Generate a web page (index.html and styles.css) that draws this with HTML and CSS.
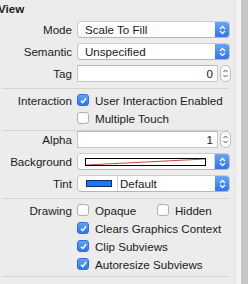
FILE: index.html
```html
<!DOCTYPE html>
<html>
<head>
<meta charset="utf-8">
<link rel="stylesheet" href="styles.css">
</head>
<body>
<div class="page">
  <div class="panel">
    <div class="title">View</div>
    <div class="section fields">
      <div class="row">
        <span class="label">Mode</span>
        <div class="popup"><span class="ptext">Scale To Fill</span><span class="arrows"><svg width="7" height="10" viewBox="0 0 7 10"><path d="M1 4 L3.5 1.5 L6 4 M1 6 L3.5 8.5 L6 6" fill="none" stroke="#fff" stroke-width="1.3"/></svg></span></div>
      </div>
      <div class="row">
        <span class="label">Semantic</span>
        <div class="popup"><span class="ptext">Unspecified</span><span class="arrows"><svg width="7" height="10" viewBox="0 0 7 10"><path d="M1 4 L3.5 1.5 L6 4 M1 6 L3.5 8.5 L6 6" fill="none" stroke="#fff" stroke-width="1.3"/></svg></span></div>
      </div>
      <div class="row">
        <span class="label">Tag</span>
        <div class="numfield"><div class="field">0</div><div class="stepper"><svg width="7" height="13" viewBox="0 0 7 13"><path d="M1.5 5 L3.5 3 L5.5 5 M1.5 8 L3.5 10 L5.5 8" fill="none" stroke="#555" stroke-width="1"/></svg></div></div>
      </div>
    </div>
    <div class="sep"></div>
    <div class="section checks">
      <div class="crow">
        <span class="label">Interaction</span>
        <span class="cb on"><svg width="9" height="9" viewBox="0 0 9 9"><path d="M2 4.7 L3.8 6.6 L7 2.2" fill="none" stroke="#fff" stroke-width="1.5"/></svg></span>
        <span class="ctext">User Interaction Enabled</span>
      </div>
      <div class="crow">
        <span class="label"></span>
        <span class="cb"></span>
        <span class="ctext">Multiple Touch</span>
      </div>
    </div>
    <div class="sep"></div>
    <div class="section fields">
      <div class="row">
        <span class="label">Alpha</span>
        <div class="numfield"><div class="field">1</div><div class="stepper"><svg width="7" height="13" viewBox="0 0 7 13"><path d="M1.5 5 L3.5 3 L5.5 5 M1.5 8 L3.5 10 L5.5 8" fill="none" stroke="#555" stroke-width="1"/></svg></div></div>
      </div>
      <div class="row">
        <span class="label">Background</span>
        <div class="popup"><span class="well"><svg class="slash" width="121" height="8" viewBox="0 0 121 8" preserveAspectRatio="none"><line x1="0" y1="8" x2="121" y2="0" stroke="#c8261e" stroke-width="1"/></svg></span><span class="arrows"><svg width="7" height="10" viewBox="0 0 7 10"><path d="M1 4 L3.5 1.5 L6 4 M1 6 L3.5 8.5 L6 6" fill="none" stroke="#fff" stroke-width="1.3"/></svg></span></div>
      </div>
      <div class="row">
        <span class="label">Tint</span>
        <div class="popup"><span class="swatch-cell"><span class="swatch"></span></span><span class="ptext tint">Default</span><span class="arrows"><svg width="7" height="10" viewBox="0 0 7 10"><path d="M1 4 L3.5 1.5 L6 4 M1 6 L3.5 8.5 L6 6" fill="none" stroke="#fff" stroke-width="1.3"/></svg></span></div>
      </div>
    </div>
    <div class="sep"></div>
    <div class="section checks">
      <div class="crow">
        <span class="label">Drawing</span>
        <span class="cb"></span>
        <span class="ctext fixed">Opaque</span>
        <span class="cb"></span>
        <span class="ctext">Hidden</span>
      </div>
      <div class="crow">
        <span class="label"></span>
        <span class="cb on"><svg width="9" height="9" viewBox="0 0 9 9"><path d="M2 4.7 L3.8 6.6 L7 2.2" fill="none" stroke="#fff" stroke-width="1.5"/></svg></span>
        <span class="ctext">Clears Graphics Context</span>
      </div>
      <div class="crow">
        <span class="label"></span>
        <span class="cb on"><svg width="9" height="9" viewBox="0 0 9 9"><path d="M2 4.7 L3.8 6.6 L7 2.2" fill="none" stroke="#fff" stroke-width="1.5"/></svg></span>
        <span class="ctext">Clip Subviews</span>
      </div>
      <div class="crow">
        <span class="label"></span>
        <span class="cb on"><svg width="9" height="9" viewBox="0 0 9 9"><path d="M2 4.7 L3.8 6.6 L7 2.2" fill="none" stroke="#fff" stroke-width="1.5"/></svg></span>
        <span class="ctext">Autoresize Subviews</span>
      </div>
    </div>
    <div class="sep"></div>
  </div>
  <div class="edge"></div>
  <div class="gutter"></div>
</div>
</body>
</html>
```

FILE: styles.css
```css
html, body {
  margin: 0;
  padding: 0;
  background: #ececec;
}
body {
  font-family: "Liberation Sans", Arial, sans-serif;
  font-size: 11.6px;
  color: #1a1a1a;
  overflow: hidden;
}
.page {
  display: flex;
  width: 248px;
  height: 284px;
  overflow: hidden;
}
.panel {
  width: 237px;
  flex: none;
}
.edge {
  width: 4px;
  background: #f3f3f3;
  flex: none;
}
.gutter {
  flex: 1;
  background: #c6c6c6;
}
.title {
  height: 21px;
  font-weight: bold;
  line-height: 16px;
  margin-left: -2px;
  padding-top: 1px;
  box-sizing: border-box;
  color: #222;
}
.section.fields {
  display: flex;
  flex-direction: column;
  gap: 5px;
  padding-bottom: 6px;
}
.sep {
  height: 1px;
  background: #d3d3d3;
  margin: 0 8px 0 2px;
}
.row {
  display: flex;
  align-items: center;
  height: 17px;
}
.label {
  width: 72px;
  flex: none;
  text-align: right;
  margin-right: 5px;
}
.popup {
  width: 153px;
  height: 17px;
  box-sizing: border-box;
  border: 1px solid #c4c4c4;
  border-top-color: #cdcdcd;
  border-bottom-color: #b5b5b5;
  border-radius: 4px;
  background: #fff;
  display: flex;
  align-items: stretch;
  overflow: hidden;
}
.ptext {
  flex: 1;
  padding-left: 7px;
  line-height: 15px;
}
.arrows {
  width: 15px;
  flex: none;
  background: linear-gradient(#6aa8fb, #2a72f0);
  display: flex;
  align-items: center;
  justify-content: center;
  margin: -1px -1px -1px 0;
}
.numfield {
  display: flex;
  align-items: center;
  height: 17px;
}
.field {
  width: 141px;
  height: 17px;
  box-sizing: border-box;
  border: 1px solid #c6c6c6;
  border-top-color: #b8b8b8;
  background: #fff;
  text-align: right;
  padding-right: 4px;
  line-height: 15px;
}
.stepper {
  margin-left: 2px;
  width: 11px;
  height: 17px;
  box-sizing: border-box;
  border: 1px solid #c0c0c0;
  border-radius: 5px;
  background: #fafafa;
  display: flex;
  align-items: center;
  justify-content: center;
}
.section.checks {
  padding: 2px 0 3px;
}
.section.checks:last-of-type {
  padding: 2px 0 2px;
}
.crow {
  display: flex;
  align-items: center;
  height: 18px;
}
.cb {
  width: 12px;
  height: 12px;
  box-sizing: border-box;
  border: 1px solid #b0b0b0;
  border-radius: 3px;
  background: #fff;
  flex: none;
  display: flex;
  align-items: center;
  justify-content: center;
}
.cb.on {
  border-color: #2c6fe0;
  background: linear-gradient(#62a3fb, #2d74f0);
}
.ctext {
  margin-left: 6px;
}
.ctext.fixed {
  width: 62px;
  flex: none;
}
.well {
  flex: 1;
  display: flex;
  align-items: center;
  padding-left: 7px;
  padding-right: 7px;
  border-right: 1px solid #d6d6d6;
}
.slash {
  display: block;
  width: 121px;
  height: 8px;
  box-sizing: border-box;
  border: 1px solid #000;
  background: #fff;
}
.swatch-cell {
  width: 40px;
  flex: none;
  display: flex;
  align-items: center;
  padding-left: 8px;
  box-sizing: border-box;
  border-right: 1px solid #d6d6d6;
}
.swatch {
  width: 26px;
  height: 7px;
  box-sizing: border-box;
  border: 1px solid #0d2f6e;
  background: #1c78f0;
}
.ptext.tint {
  padding-left: 2px;
}
```
